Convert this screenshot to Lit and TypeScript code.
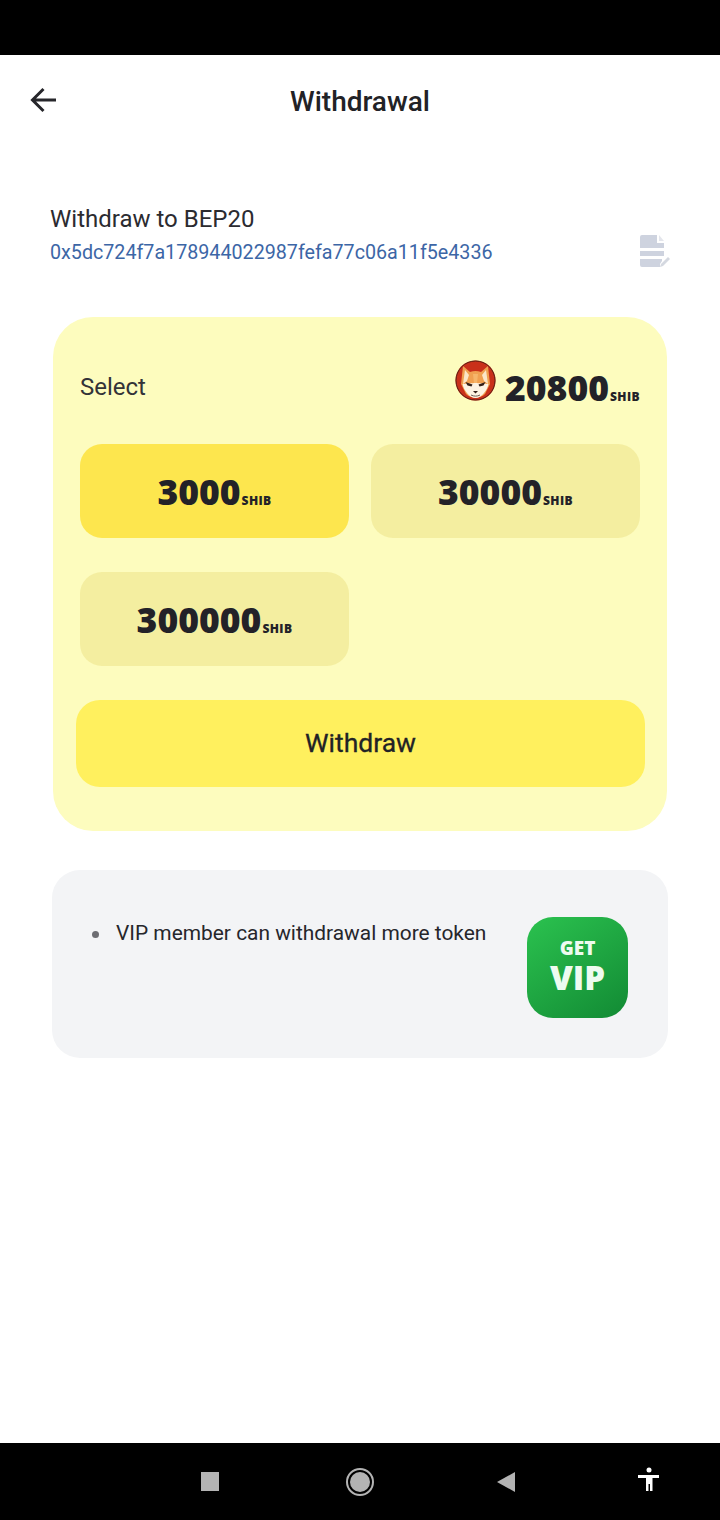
import { LitElement, html, css } from "lit";
import { customElement } from "lit/decorators.js";

const SANS = css`Roboto, "Liberation Sans", sans-serif`;

@customElement("app-root")
export class AppRoot extends LitElement {
  static styles = css`
    :host {
      display: flex;
      flex-direction: column;
      width: 720px;
      height: 1520px;
      background: #fff;
      font-family: ${SANS};
      color: #222226;
      overflow: hidden;
    }
    .status { height: 55px; background: #000; flex: none; }
    .main { flex: 1; display: flex; flex-direction: column; min-height: 0; }
    .header {
      height: 92px;
      display: flex;
      align-items: center;
      justify-content: center;
      position: relative;
      flex: none;
    }
    .back { position: absolute; left: 28.500px; top: 30px; width: 30px; height: 30px; }
    .title { font-size: 28px; font-weight: 500; line-height: 92px; padding-top: 2px; }
    .addr-row {
      margin: 57px 48px 0 50px;
      display: flex;
      justify-content: space-between;
      height: 60px;
      flex: none;
    }
    .addr-label { font-size: 24px; line-height: 30px; color: #2b2b30; }
    .addr { font-size: 19.700px; line-height: 30px; color: #3c66a6; margin-top: 4px; }
    .doc { width: 34px; height: 34px; margin-top: 30px; }
    .card {
      margin: 53px 53px 0 53px;
      height: 514px;
      box-sizing: border-box;
      background: #fdfcbe;
      border-radius: 40px;
      padding: 0 27px;
      display: flex;
      flex-direction: column;
      flex: none;
    }
    .card-top {
      height: 127px;
      box-sizing: border-box;
      padding-top: 13px;
      display: flex;
      align-items: center;
      justify-content: space-between;
      flex: none;
    }
    .select { font-size: 24px; color: #333338; }
    .balance { display: flex; align-items: center; gap: 9px; }
    .shiba { width: 41px; height: 41px; margin-top: -14px; }
    .num {
      font-family: "Open Sans", "Noto Sans", sans-serif;
      font-weight: 800;
      color: #232228;
      white-space: nowrap;
      display: flex;
      align-items: baseline;
    }
    .num b { font-weight: 800; font-size: 35.500px; line-height: 40px; }
    .num span { font-size: 12px; font-weight: 800; letter-spacing: 0.4px; margin-left: 1px; }
    .grid {
      display: grid;
      grid-template-columns: 269px 269px;
      column-gap: 22px;
      row-gap: 34px;
      flex: none;
    }
    .opt {
      height: 94px;
      border-radius: 22px;
      background: #f4eea0;
      display: flex;
      align-items: center;
      justify-content: center;
    }
    .opt.on { background: #fde64e; }
    .btn {
      margin: 34px -5px 0 -4px;
      height: 87px;
      border-radius: 24px;
      background: #fff05e;
      display: flex;
      align-items: center;
      justify-content: center;
      padding-bottom: 2px;
      box-sizing: border-box;
      font-size: 26.500px;
      font-weight: 400;
      -webkit-text-stroke: 0.3px #222226;
      color: #222226;
      flex: none;
    }
    .info {
      margin: 39px 52px 0 52px;
      height: 188px;
      box-sizing: border-box;
      background: #f3f4f6;
      border-radius: 28px;
      padding: 47px 40px 0 38px;
      display: flex;
      justify-content: space-between;
      align-items: flex-start;
      flex: none;
    }
    .tip { display: flex; align-items: center; font-size: 20.900px; line-height: 32px; color: #26262b; }
    .dot { width: 7px; height: 7px; border-radius: 50%; background: #6d6d72; margin: 3px 17px 0 2px; }
    .vip {
      width: 101px;
      height: 101px;
      box-sizing: border-box;
      padding-bottom: 2px;
      border-radius: 26px;
      background: linear-gradient(145deg, #2bc24f, #128a34);
      color: #eefbf0;
      display: flex;
      flex-direction: column;
      align-items: center;
      justify-content: center;
      font-family: "Open Sans", "Noto Sans", sans-serif;
      font-weight: 800;
    }
    .vip .g { font-size: 19px; line-height: 20px; margin-bottom: 2px; }
    .vip .v { font-size: 33px; line-height: 36px; }
    .spacer { flex: 1; }
    .nav { height: 77px; flex: none; background: #000; }
    .nav svg { display: block; width: 720px; height: 77px; }
  `;

  private num(v: string) {
    return html`<div class="num"><b>${v}</b><span>SHIB</span></div>`;
  }

  render() {
    return html`
      <div class="status"></div>
      <div class="main">
        <div class="header">
          <svg class="back" viewBox="0 0 30 30" fill="none" stroke="#26262b" stroke-width="3">
            <path d="M27 15H4M14.500 4 3.500 15l11 11" />
          </svg>
          <div class="title">Withdrawal</div>
        </div>
        <div class="addr-row">
          <div>
            <div class="addr-label">Withdraw to BEP20</div>
            <div class="addr">0x5dc724f7a178944022987fefa77c06a11f5e4336</div>
          </div>
          <svg class="doc" viewBox="0 0 34 34">
            <path fill="#ced3df" d="M4 1h15v8h7v5H2V3a2 2 0 0 1 2-2zM2 17h24v5H2zM2 25h22v2l-2 3v3H4a2 2 0 0 1-2-2z" />
            <path fill="#e4e6ec" d="M21 1l5 6h-5z" />
            <path fill="#d4d8e0" d="M23 30l7-7 2 2-7 7-3 1z" />
          </svg>
        </div>
        <div class="card">
          <div class="card-top">
            <div class="select">Select</div>
            <div class="balance">
              <svg class="shiba" viewBox="0 0 41 41">
                <circle cx="20.500" cy="20.500" r="20" fill="#c9301a" />
                <circle cx="20.500" cy="20.500" r="19.500" fill="none" stroke="#5a2015" stroke-width="1" />
                <path fill="#f0a050" d="M8 6l7 6c4-1.500 7-1.500 11 0l7-6 2 18-5 10c-5 5-14 5-19 0L6 24z" />
                <path fill="#fbe6c8" d="M10 10l4 5-2 6-4 3zM31 10l-4 5 2 6 4 3z" />
                <path fill="#fdf3e3" d="M20.500 23c3 0 10 1 13 1-1 6-7 14-13 14S8.500 30 7.500 24c3 0 10-1 13-1z" />
                <path fill="#f6b56a" d="M18 14h5l-1 9h-3z" />
                <path fill="#33201a" d="M10.500 22l7 2.500-1 2-4-1zM30.500 22l-7 2.500 1 2 4-1z" />
                <path fill="#33201a" d="M18 31h5l-2.500 2.500z" />
                <path fill="none" stroke="#6b5c55" stroke-width="1" d="M16 35c3 1.500 6 1.500 9 0" />
              </svg>
              ${this.num("20800")}
            </div>
          </div>
          <div class="grid">
            <div class="opt on">${this.num("3000")}</div>
            <div class="opt">${this.num("30000")}</div>
            <div class="opt">${this.num("300000")}</div>
          </div>
          <div class="btn">Withdraw</div>
        </div>
        <div class="info">
          <div class="tip"><span class="dot"></span>VIP member can withdrawal more token</div>
          <div class="vip"><div class="g">GET</div><div class="v">VIP</div></div>
        </div>
        <div class="spacer"></div>
        <div class="nav">
          <svg viewBox="0 0 720 77">
            <rect x="201" y="29" width="18" height="19" fill="#b3b3b3" />
            <circle cx="360" cy="39" r="13" fill="none" stroke="#b3b3b3" stroke-width="2" />
            <circle cx="360" cy="39" r="10" fill="#b3b3b3" />
            <path fill="#b3b3b3" d="M515 29v20l-18-10z" />
            <circle cx="649" cy="27" r="2.500" fill="#fff" />
            <path fill="#fff" d="M638 32h21v3h-6.500v13h-2.500v-7h-1.500v7H646V35h-8z" />
          </svg>
        </div>
      </div>
    `;
  }
}
